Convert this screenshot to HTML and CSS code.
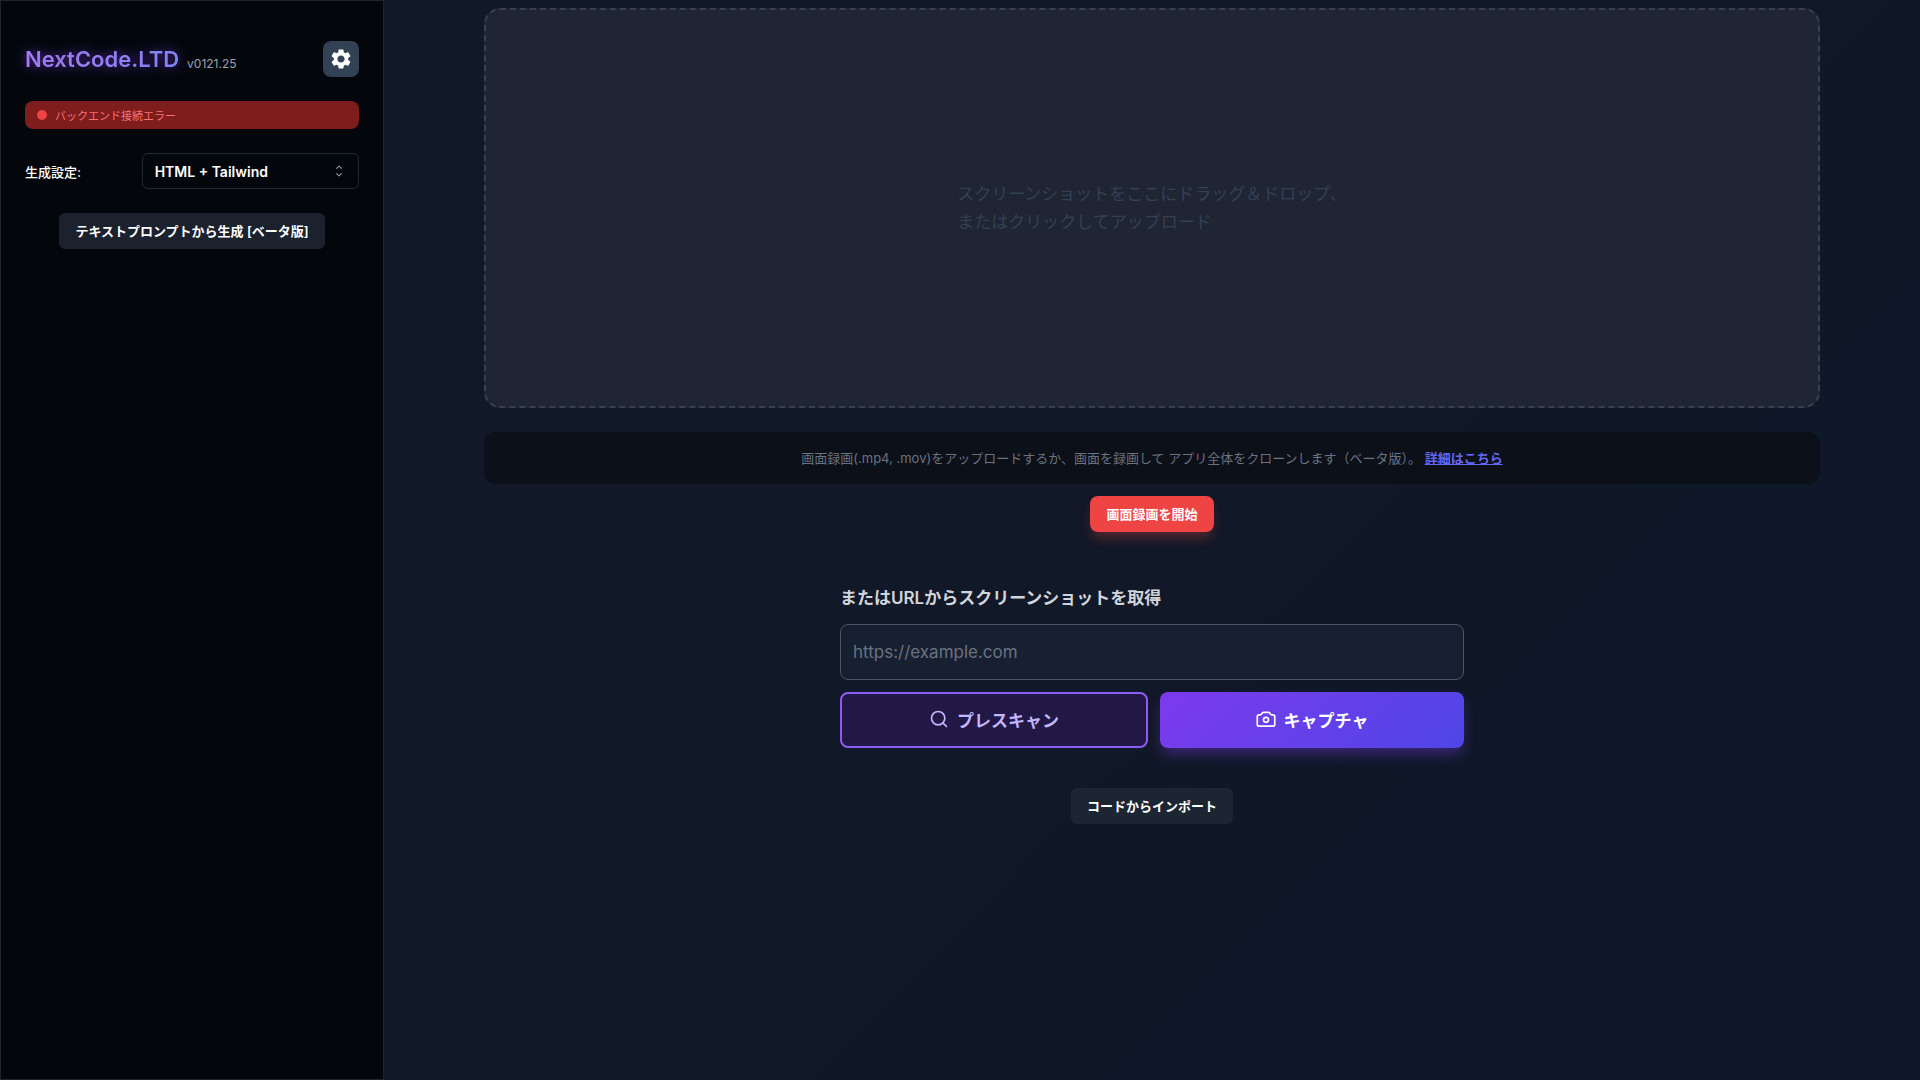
FILE: index.html
```html
<!DOCTYPE html>
<html lang="ja">
	<head>
		<meta charset="UTF-8" />
		<meta name="viewport" content="width=device-width, initial-scale=1.0" />
		<title>NextCode.LTD</title>
		<link rel="stylesheet" href="styles.css">
	</head>
	<body>
		<aside class="sidebar">
			<div class="sidebar-header">
				<h1 class="logo">NextCode.LTD</h1>
				<span class="version">v0121.25</span>
				<button type="button" class="settings-button" aria-label="設定">
					<svg width="24" height="24" viewBox="0 0 24 24" fill="currentColor">
						<path d="M19.14 12.94c.04-.3.06-.61.06-.94 0-.32-.02-.64-.07-.94l2.03-1.58c.18-.14.23-.41.12-.61l-1.92-3.32c-.12-.22-.37-.29-.59-.22l-2.39.96c-.5-.38-1.03-.7-1.62-.94l-.36-2.54c-.04-.24-.24-.41-.48-.41h-3.84c-.24 0-.43.17-.47.41l-.36 2.54c-.59.24-1.13.57-1.62.94l-2.39-.96c-.22-.08-.47 0-.59.22L2.74 8.87c-.12.21-.08.47.12.61l2.03 1.58c-.05.3-.09.63-.09.94s.02.64.07.94l-2.03 1.58c-.18.14-.23.41-.12.61l1.92 3.32c.12.22.37.29.59.22l2.39-.96c.5.38 1.03.7 1.62.94l.36 2.54c.05.24.24.41.48.41h3.84c.24 0 .44-.17.47-.41l.36-2.54c.59-.24 1.13-.56 1.62-.94l2.39.96c.22.08.47 0 .59-.22l1.92-3.32c.12-.22.07-.47-.12-.61l-2.01-1.58zM12 15.6c-1.98 0-3.6-1.62-3.6-3.6s1.62-3.6 3.6-3.6 3.6 1.62 3.6 3.6-1.62 3.6-3.6 3.6z" />
					</svg>
				</button>
			</div>

			<div class="status">
				<span class="status-dot"></span>
				<span>バックエンド接続エラー</span>
			</div>

			<div class="setting-row">
				<label for="stack">生成設定:</label>
				<div class="select-wrap">
					<select id="stack">
						<option>HTML + Tailwind</option>
					</select>
					<svg class="select-icon" width="16" height="16" viewBox="0 0 15 15" fill="currentColor">
						<path d="M4.93 5.43a.45.45 0 0 0 .64 0L7.5 3.5l1.93 1.93a.45.45 0 0 0 .64-.64L7.82 2.54a.45.45 0 0 0-.64 0L4.93 4.79a.45.45 0 0 0 0 .64zM4.93 9.57a.45.45 0 0 1 .64 0L7.5 11.5l1.93-1.93a.45.45 0 0 1 .64.64l-2.25 2.25a.45.45 0 0 1-.64 0l-2.25-2.25a.45.45 0 0 1 0-.64z" />
					</svg>
				</div>
			</div>

			<button type="button" class="btn">テキストプロンプトから生成 [ベータ版]</button>
		</aside>

		<main class="main">
			<button type="button" class="dropzone">
				<span>スクリーンショットをここにドラッグ＆ドロップ、<br />またはクリックしてアップロード</span>
			</button>

			<p class="info">
				画面録画(.mp4, .mov)をアップロードするか、画面を録画して アプリ全体をクローンします（ベータ版）。
				<a href="#">詳細はこちら</a>
			</p>

			<button type="button" class="btn btn-record">画面録画を開始</button>

			<form class="url-form">
				<label for="url">またはURLからスクリーンショットを取得</label>
				<input type="url" id="url" placeholder="https://example.com" />
				<div class="url-actions">
					<button type="button" class="btn-large btn-scan">
						<svg width="20" height="20" viewBox="0 0 24 24" fill="none" stroke="currentColor" stroke-width="2" stroke-linecap="round" stroke-linejoin="round">
							<circle cx="11" cy="11" r="8" />
							<path d="M21 21l-4.3-4.3" />
						</svg>
						プレスキャン
					</button>
					<button type="button" class="btn-large btn-capture">
						<svg width="20" height="20" viewBox="0 0 24 24" fill="none" stroke="currentColor" stroke-width="2" stroke-linecap="round" stroke-linejoin="round">
							<path d="M1.500 9a2 2 0 0 1 2-2h1.400a2 2 0 0 0 1.700-.9l.9-1.300a2 2 0 0 1 1.700-.8h5.600a2 2 0 0 1 1.700.8l.9 1.300a2 2 0 0 0 1.700.9h1.400a2 2 0 0 1 2 2v9.500a2 2 0 0 1-2 2h-17a2 2 0 0 1-2-2z" />
							<circle cx="12" cy="13" r="3" />
						</svg>
						キャプチャ
					</button>
				</div>
			</form>

			<button type="button" class="btn btn-import">コードからインポート</button>
		</main>
	</body>
</html>
```

FILE: styles.css
```css
* {
	box-sizing: border-box;
}
body {
	margin: 0;
	min-height: 100vh;
	display: flex;
	font-family: Inter, "Noto Sans CJK JP", sans-serif;
	font-size: 13px;
	color: #fff;
	background: linear-gradient(135deg, #111827 0%, #111827 60%, #0e1828 80%);
}
button,
input,
select {
	font-family: inherit;
	color: inherit;
}
button {
	cursor: pointer;
}

/* サイドバー */
.sidebar {
	width: 384px;
	flex-shrink: 0;
	display: flex;
	flex-direction: column;
	padding: 40px 24px;
	background: #03070c;
	border: 1px solid #1f2430;
}
.sidebar-header {
	display: flex;
	align-items: center;
	margin-bottom: 24px;
}
.logo {
	margin: 0;
	font-size: 22px;
	line-height: 36px;
	font-weight: 600;
	background: linear-gradient(90deg, #a27aee, #8184f5);
	-webkit-background-clip: text;
	background-clip: text;
	color: transparent;
	filter: drop-shadow(0 0 6px rgba(124, 58, 237, 0.7));
}
.version {
	margin: 8px 0 0 8px;
	font-size: 12px;
	color: #9ca3af;
}
.settings-button {
	display: flex;
	align-items: center;
	justify-content: center;
	width: 36px;
	height: 36px;
	margin-left: auto;
	padding: 0;
	border: none;
	border-radius: 8px;
	background: #334155;
}
.status {
	display: flex;
	align-items: center;
	gap: 8px;
	height: 28px;
	padding: 0 12px;
	margin-bottom: 24px;
	border-radius: 8px;
	background: #7f1d1d;
	color: #f87171;
	font-size: 11px;
}
.status-dot {
	width: 10px;
	height: 10px;
	border-radius: 50%;
	background: #ef4444;
}
.setting-row {
	display: grid;
	grid-template-columns: 1fr 2fr;
	align-items: center;
	gap: 8px;
	margin-bottom: 24px;
	font-weight: 500;
}
.select-wrap {
	position: relative;
}
.select-wrap select {
	width: 100%;
	height: 36px;
	padding: 0 12px;
	appearance: none;
	border: 1px solid #1f2937;
	border-radius: 6px;
	background: transparent;
	font-size: 14px;
	font-weight: 600;
}
.select-icon {
	position: absolute;
	right: 12px;
	top: 10px;
	color: #9ca3af;
	pointer-events: none;
}
.btn {
	align-self: center;
	height: 36px;
	padding: 0 16px 2px;
	border: none;
	border-radius: 6px;
	background: #1b212d;
	font-size: 13px;
	font-weight: 600;
}

/* メイン */
.main {
	flex: 1;
	display: flex;
	flex-direction: column;
	padding: 8px 100px;
}
.dropzone {
	display: flex;
	align-items: center;
	justify-content: center;
	height: 400px;
	border: 2px dashed #374151;
	border-radius: 16px;
	background: #1f2532;
	color: #334155;
	font-size: 17px;
	line-height: 28px;
	text-align: left;
}
.info {
	margin: 24px 0 12px;
	padding: 16px;
	border-radius: 12px;
	background: #0b1019;
	color: #6b7280;
	line-height: 20px;
	text-align: center;
}
.info a {
	color: #6366f1;
	font-weight: 600;
}
.btn-record {
	border-radius: 8px;
	background: #ef4444;
	box-shadow: 0 8px 12px -2px rgba(239, 68, 68, 0.3);
}
.url-form {
	align-self: center;
	width: 100%;
	max-width: 624px;
	margin: 52px 0 40px;
}
.url-form label {
	display: block;
	margin-bottom: 12px;
	color: #d1d5db;
	font-size: 17px;
	line-height: 28px;
	font-weight: 600;
}
.url-form input {
	width: 100%;
	height: 56px;
	padding: 0 12px;
	border: 1px solid #4b5563;
	border-radius: 8px;
	background: #172030;
	font-size: 17px;
}
.url-form input::placeholder {
	color: #6b7280;
}
.url-actions {
	display: flex;
	gap: 12px;
	margin-top: 12px;
}
.btn-large {
	flex: 1 1 auto;
	display: flex;
	align-items: center;
	justify-content: center;
	gap: 8px;
	height: 56px;
	padding: 0 8px 2px;
	border: none;
	border-radius: 8px;
	font-size: 17px;
	font-weight: 600;
}
.btn-scan {
	flex-basis: 156px;
	border: 2px solid #8b5cf6;
	background: #211845;
	color: #c4b5fd;
}
.btn-capture {
	flex-basis: 152px;
	background: linear-gradient(135deg, #7c3aed, #4f46e5);
	box-shadow: 0 8px 14px -2px rgba(124, 58, 237, 0.4);
}
.btn-import {
	background: #1c2532;
}
```
